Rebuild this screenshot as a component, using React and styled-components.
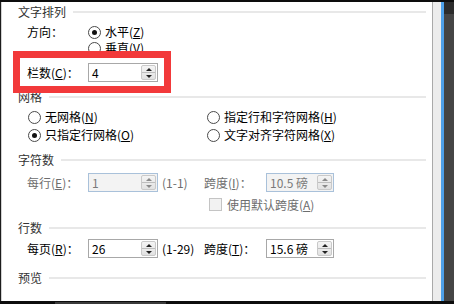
import React from 'react';
import styled, { createGlobalStyle } from 'styled-components';

const Global = createGlobalStyle`
  html, body { margin: 0; padding: 0; background: #0d0d0d; }
  body { font-family: "Noto Sans CJK SC", "Liberation Sans", sans-serif; }
  #root { width: 454px; height: 304px; }
`;

const Frame = styled.div`
  width: 454px;
  height: 304px;
  box-sizing: border-box;
  display: flex;
  flex-direction: column;
  border-top: 2px solid #0d0d0d;
  background: #0d0d0d;
`;

const Body = styled.div`
  flex: 1;
  display: flex;
  min-height: 0;
  border-left: 1px solid #1c1c1c;
`;

const BottomBar = styled.div`
  height: 3px;
  flex-shrink: 0;
  display: flex;
  align-items: flex-end;
  background: #0d0d0d;
`;
const BottomTab = styled.div`
  margin-left: 55px;
  width: 111px;
  height: 2px;
  background: #3a3a3a;
`;

const Dialog = styled.div`
  position: relative;
  flex: 1;
  display: flex;
  flex-direction: column;
  background: #fff;
  border-left: 1px solid #d2d2d2;
  padding: 0 6px 0 16px;
  overflow: hidden;
  font-size: 12px;
  color: #000;
`;

const EdgeBorder = styled.div`
  width: 1px;
  background: #a9a9a9;
`;
const EdgePane = styled.div`
  width: 8px;
  background: #ececec;
`;
const EdgeBlue = styled.div`
  width: 3px;
  background: #4ea1ea;
`;
const EdgeDark = styled.div`
  width: 10px;
  background: linear-gradient(#2c2c2c 0 12px, #454545 12px);
`;

const Header = styled.div`
  display: flex;
  align-items: center;
  gap: 7px;
  height: 20px;
  margin-top: ${p => p.$top || 0}px;
  flex-shrink: 0;
`;
const Title = styled.span`
  color: #333;
  font-size: 12px;
  line-height: 20px;
  white-space: nowrap;
`;
const Rule = styled.div`
  flex: 1;
  height: 2px;
  background: #e8e8e8;
`;

const FieldRow = styled.div`
  display: flex;
  align-items: center;
  height: ${p => p.$h || 16}px;
  margin-top: ${p => p.$top || 0}px;
  margin-left: 9px;
  flex-shrink: 0;
  color: ${p => (p.$disabled ? '#6d6d6d' : '#000')};
  white-space: nowrap;
`;
const Label = styled.span`
  width: ${p => p.$w || 61}px;
  flex-shrink: 0;
  line-height: 16px;
`;
const Range = styled.span`
  width: 42px;
  margin-left: 4px;
  flex-shrink: 0;
`;

const RadioItem = styled.label`
  display: flex;
  align-items: center;
  gap: 4px;
  height: 16px;
  line-height: 16px;
  white-space: nowrap;
`;
const RadioCircle = styled.span`
  width: 11px;
  height: 11px;
  border-radius: 50%;
  border: 1px solid #4a4a4a;
  background: #fff;
  display: flex;
  align-items: center;
  justify-content: center;
  flex-shrink: 0;
  &::after {
    content: '';
    width: 5px;
    height: 5px;
    border-radius: 50%;
    background: ${p => (p.$checked ? '#111' : 'transparent')};
  }
`;

const Radio = ({ checked, children }) => (
  <RadioItem>
    <RadioCircle $checked={checked} />
    <span>{children}</span>
  </RadioItem>
);

const GridRadios = styled.div`
  display: grid;
  grid-template-columns: 179px auto;
  row-gap: 2px;
  margin-top: 2px;
  margin-left: 10px;
  flex-shrink: 0;
`;

const SpinBox = styled.div`
  width: ${p => p.$w}px;
  height: 19px;
  box-sizing: border-box;
  display: flex;
  flex-shrink: 0;
  border: 1px solid ${p => (p.$disabled ? '#a9c1da' : '#a8a8a8')};
  background: ${p => (p.$disabled ? '#f3f3f3' : '#fff')};
`;
const SpinValue = styled.div`
  flex: 1;
  padding-left: 3px;
  font-size: 12px;
  line-height: 17px;
  color: ${p => (p.$disabled ? '#7a7a7a' : '#000')};
  white-space: nowrap;
  overflow: hidden;
`;
const SpinButtons = styled.div`
  width: 15px;
  margin: 1px;
  display: flex;
  flex-direction: column;
  border: 1px solid #c9c9c9;
  border-radius: 2px;
  background: linear-gradient(#f4f4f4, #e2e2e2);
  box-sizing: border-box;
`;
const SpinHalf = styled.div`
  flex: 1;
  display: flex;
  align-items: center;
  justify-content: center;
  & + & { border-top: 1px solid #bdbdbd; }
  &::after {
    content: '';
    border-left: 3px solid transparent;
    border-right: 3px solid transparent;
    ${p => (p.$down ? 'border-top' : 'border-bottom')}: 3px solid ${p => (p.$disabled ? '#8a8a8a' : '#222')};
  }
`;

const Spin = ({ w, value, disabled }) => (
  <SpinBox $w={w} $disabled={disabled}>
    <SpinValue $disabled={disabled}>{value}</SpinValue>
    <SpinButtons>
      <SpinHalf $disabled={disabled} />
      <SpinHalf $down $disabled={disabled} />
    </SpinButtons>
  </SpinBox>
);

const CheckRow = styled.div`
  display: flex;
  align-items: center;
  gap: 5px;
  height: 16px;
  margin-top: 4px;
  margin-left: 191px;
  color: #6d6d6d;
  white-space: nowrap;
  flex-shrink: 0;
`;
const CheckBox = styled.span`
  width: 13px;
  height: 13px;
  box-sizing: border-box;
  border: 1px solid #c4c4c4;
  background: #f2f2f2;
  flex-shrink: 0;
`;

const Highlight = styled.div`
  position: absolute;
  left: 11px;
  top: 49px;
  width: 158px;
  height: 42px;
  box-sizing: border-box;
  border: 7px solid #f2393a;
  pointer-events: none;
`;

const Key = styled.u`
  text-underline-offset: 1px;
`;

export default function App() {
  return (
    <>
      <Global />
      <Frame>
        <Body>
          <Dialog>
            <Header><Title>文字排列</Title><Rule /></Header>
            <FieldRow $top={2}>
              <Label>方向：</Label>
              <Radio checked>水平(<Key>Z</Key>)</Radio>
            </FieldRow>
            <FieldRow>
              <Label />
              <Radio>垂直(<Key>V</Key>)</Radio>
            </FieldRow>
            <FieldRow $top={7} $h={19}>
              <Label>栏数(<Key>C</Key>)：</Label>
              <Spin w={70} value="4" />
            </FieldRow>

            <Header $top={5}><Title>网格</Title><Rule /></Header>
            <GridRadios>
              <Radio>无网格(<Key>N</Key>)</Radio>
              <Radio>指定行和字符网格(<Key>H</Key>)</Radio>
              <Radio checked>只指定行网格(<Key>O</Key>)</Radio>
              <Radio>文字对齐字符网格(<Key>X</Key>)</Radio>
            </GridRadios>

            <Header $top={7}><Title>字符数</Title><Rule /></Header>
            <FieldRow $top={3} $h={19} $disabled>
              <Label>每行(<Key>E</Key>)：</Label>
              <Spin w={70} value="1" disabled />
              <Range>(1-1)</Range>
              <Label $w={62}>跨度(<Key>I</Key>)：</Label>
              <Spin w={68} value="10.5 磅" disabled />
            </FieldRow>
            <CheckRow>
              <CheckBox />
              <span>使用默认跨度(<Key>A</Key>)</span>
            </CheckRow>

            <Header $top={6}><Title>行数</Title><Rule /></Header>
            <FieldRow $top={1} $h={19}>
              <Label>每页(<Key>R</Key>)：</Label>
              <Spin w={70} value="26" />
              <Range>(1-29)</Range>
              <Label $w={62}>跨度(<Key>T</Key>)：</Label>
              <Spin w={68} value="15.6 磅" />
            </FieldRow>

            <Header $top={10}><Title>预览</Title><Rule /></Header>

            <Highlight />
          </Dialog>
          <EdgeBorder />
          <EdgePane />
          <EdgeBlue />
          <EdgeDark />
        </Body>
        <BottomBar>
          <BottomTab />
        </BottomBar>
      </Frame>
    </>
  );
}
